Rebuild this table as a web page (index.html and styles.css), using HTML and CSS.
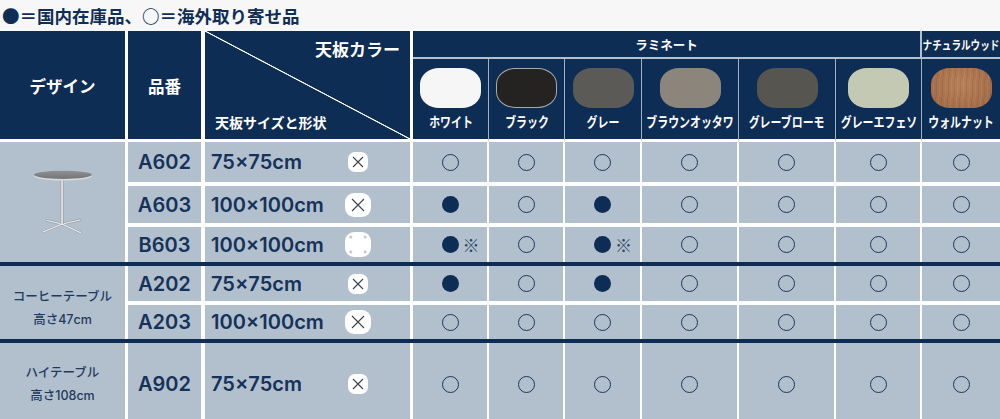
FILE: index.html
```html
<!DOCTYPE html>
<html lang="ja">
<head>
<meta charset="utf-8">
<title>テーブル 天板カラー一覧</title>
<link rel="stylesheet" href="styles.css">
</head>
<body>
<p class="legend">●＝国内在庫品、○＝海外取り寄せ品</p>
<div class="table">
  <div class="h h-side h-design">デザイン</div>
  <div class="h h-side h-code">品番</div>
  <div class="h h-side h-diag"><span class="diag-top">天板カラー</span><span class="diag-bottom">天板サイズと形状</span></div>
  <div class="h h-band h-laminate">ラミネート</div>
  <div class="h h-band h-natural"><span class="cond">ナチュラルウッド</span></div>
  <div class="h h-sw"><span class="swatch sw-white"></span><span class="sw-label">ホワイト</span></div>
  <div class="h h-sw"><span class="swatch sw-black"></span><span class="sw-label">ブラック</span></div>
  <div class="h h-sw"><span class="swatch sw-grey"></span><span class="sw-label">グレー</span></div>
  <div class="h h-sw"><span class="swatch sw-brown"></span><span class="sw-label">ブラウンオッタワ</span></div>
  <div class="h h-sw"><span class="swatch sw-bromo"></span><span class="sw-label">グレーブローモ</span></div>
  <div class="h h-sw"><span class="swatch sw-efeso"></span><span class="sw-label">グレーエフェソ</span></div>
  <div class="h h-sw last"><span class="swatch sw-walnut"></span><span class="sw-label">ウォルナット</span></div>

  <!-- group 1 -->
  <div class="c design span3">
    <svg class="table-pic" width="64" height="66" viewBox="0 0 64 66">
      <defs>
        <linearGradient id="pole" x1="0" y1="0" x2="1" y2="0">
          <stop offset="0" stop-color="#9a9ea4"/>
          <stop offset="0.5" stop-color="#f2f3f5"/>
          <stop offset="1" stop-color="#8e9298"/>
        </linearGradient>
        <linearGradient id="top" x1="0" y1="0" x2="0" y2="1">
          <stop offset="0" stop-color="#909193"/>
          <stop offset="1" stop-color="#737477"/>
        </linearGradient>
      </defs>
      <g stroke="#9aa0a8" stroke-width="2.4" stroke-linecap="round">
        <path d="M31 55 L12 63"/><path d="M31 55 L50 64"/><path d="M31 55 L16 51.5"/><path d="M31 55 L49 51"/>
      </g>
      <g stroke="#eceef1" stroke-width="1.2" stroke-linecap="round">
        <path d="M31 55 L12 63"/><path d="M31 55 L50 64"/><path d="M31 55 L16 51.5"/><path d="M31 55 L49 51"/>
      </g>
      <rect x="29.3" y="9" width="3.6" height="46" fill="url(#pole)"/>
      <ellipse cx="32" cy="7" rx="29" ry="4.6" fill="#d9dadc"/>
      <ellipse cx="32" cy="5.8" rx="29" ry="4.1" fill="url(#top)"/>
    </svg>
  </div>
  <div class="c code gap">A602</div>
  <div class="c size gap"><span>75×75cm</span>
    <svg class="shape" width="20" height="20" viewBox="0 0 20 20"><rect width="20" height="20" rx="7" fill="#fff"/><path d="M5 5L15 15M15 5L5 15" stroke="#3b414a" stroke-width="1.1"/></svg></div>
  <div class="c m gap"><span class="o"></span></div>
  <div class="c m gap"><span class="o"></span></div>
  <div class="c m gap"><span class="o"></span></div>
  <div class="c m gap"><span class="o"></span></div>
  <div class="c m gap"><span class="o"></span></div>
  <div class="c m gap"><span class="o"></span></div>
  <div class="c m gap last"><span class="o"></span></div>

  <div class="c code gap">A603</div>
  <div class="c size gap"><span>100×100cm</span>
    <svg class="shape" width="26" height="24" viewBox="0 0 26 24"><rect width="26" height="24" rx="9" fill="#fff"/><path d="M7 6L19 18M19 6L7 18" stroke="#3b414a" stroke-width="1.1"/></svg></div>
  <div class="c m gap"><span class="f"></span></div>
  <div class="c m gap"><span class="o"></span></div>
  <div class="c m gap"><span class="f"></span></div>
  <div class="c m gap"><span class="o"></span></div>
  <div class="c m gap"><span class="o"></span></div>
  <div class="c m gap"><span class="o"></span></div>
  <div class="c m gap last"><span class="o"></span></div>

  <div class="c code">B603</div>
  <div class="c size"><span>100×100cm</span>
    <svg class="shape" width="26" height="25" viewBox="0 0 26 25"><rect width="26" height="25" rx="9" fill="#fff"/><g fill="#c3c7ce"><rect x="4.5" y="3.8" width="2.6" height="2.6"/><rect x="18.9" y="3.8" width="2.6" height="2.6"/><rect x="4.5" y="18.6" width="2.6" height="2.6"/><rect x="18.9" y="18.6" width="2.6" height="2.6"/></g></svg></div>
  <div class="c m"><span class="f"></span><span class="note">※</span></div>
  <div class="c m"><span class="o"></span></div>
  <div class="c m"><span class="f"></span><span class="note">※</span></div>
  <div class="c m"><span class="o"></span></div>
  <div class="c m"><span class="o"></span></div>
  <div class="c m"><span class="o"></span></div>
  <div class="c m last"><span class="o"></span></div>

  <div class="sep"></div>

  <!-- group 2 -->
  <div class="c design span2 label g2">コーヒーテーブル<br>高さ47cm</div>
  <div class="c code gap">A202</div>
  <div class="c size gap"><span>75×75cm</span>
    <svg class="shape" width="20" height="20" viewBox="0 0 20 20"><rect width="20" height="20" rx="7" fill="#fff"/><path d="M5 5L15 15M15 5L5 15" stroke="#3b414a" stroke-width="1.1"/></svg></div>
  <div class="c m gap"><span class="f"></span></div>
  <div class="c m gap"><span class="o"></span></div>
  <div class="c m gap"><span class="f"></span></div>
  <div class="c m gap"><span class="o"></span></div>
  <div class="c m gap"><span class="o"></span></div>
  <div class="c m gap"><span class="o"></span></div>
  <div class="c m gap last"><span class="o"></span></div>

  <div class="c code">A203</div>
  <div class="c size"><span>100×100cm</span>
    <svg class="shape" width="26" height="24" viewBox="0 0 26 24"><rect width="26" height="24" rx="9" fill="#fff"/><path d="M7 6L19 18M19 6L7 18" stroke="#3b414a" stroke-width="1.1"/></svg></div>
  <div class="c m"><span class="o"></span></div>
  <div class="c m"><span class="o"></span></div>
  <div class="c m"><span class="o"></span></div>
  <div class="c m"><span class="o"></span></div>
  <div class="c m"><span class="o"></span></div>
  <div class="c m"><span class="o"></span></div>
  <div class="c m last"><span class="o"></span></div>

  <div class="sep"></div>

  <!-- group 3 -->
  <div class="c design label">ハイテーブル<br>高さ108cm</div>
  <div class="c code">A902</div>
  <div class="c size"><span>75×75cm</span>
    <svg class="shape" width="20" height="20" viewBox="0 0 20 20"><rect width="20" height="20" rx="7" fill="#fff"/><path d="M5 5L15 15M15 5L5 15" stroke="#3b414a" stroke-width="1.1"/></svg></div>
  <div class="c m"><span class="o"></span></div>
  <div class="c m"><span class="o"></span></div>
  <div class="c m"><span class="o"></span></div>
  <div class="c m"><span class="o"></span></div>
  <div class="c m"><span class="o"></span></div>
  <div class="c m"><span class="o"></span></div>
  <div class="c m last"><span class="o"></span></div>
</div>
</body>
</html>
```

FILE: styles.css
```css
* { box-sizing: border-box; }
html, body { margin: 0; padding: 0; }
body {
  width: 1000px;
  height: 419px;
  overflow: hidden;
  background: #f7f7f7;
  font-family: "Noto Sans CJK JP", "Noto Sans", sans-serif;
}

.legend {
  margin: 0;
  height: 31px;
  padding-left: 2px;
  font-size: 17.5px;
  font-weight: 700;
  line-height: 32px;
  color: #0f2d55;
  white-space: nowrap;
}

.table {
  display: grid;
  grid-template-columns: 128px 77px 208px 76px 76px 77px 97px 97px 86px 78px;
  grid-template-rows: 28px 83px 44px 41px 35px 4px 39px 34px 4px 82px;
  background: #fff;
}

/* header */
.h {
  background: #0e2d54;
  color: #fff;
  font-weight: 700;
}
.h-side {
  grid-row: span 2;
  display: flex;
  align-items: center;
  justify-content: center;
  border-bottom: 3px solid #fff;
  font-size: 16.5px;
  padding-top: 2px;
}
.h-design { border-right: 3px solid #fff; }
.h-code { border-right: 4px solid #fff; }
.h-diag {
  border-right: 3px solid #fff;
  flex-direction: column;
  justify-content: space-between;
  align-items: stretch;
  padding: 8px 10px;
  background: linear-gradient(to top right,
    #0e2d54 calc(50% - 0.9px), #ffffff calc(50% - 0.3px),
    #ffffff calc(50% + 0.3px), #0e2d54 calc(50% + 0.9px));
}
.diag-top {
  align-self: flex-end;
  font-size: 17px;
  line-height: 20px;
}
.diag-bottom {
  align-self: flex-start;
  font-size: 14px;
  line-height: 18px;
}
.h-band {
  display: flex;
  align-items: center;
  justify-content: center;
  border-bottom: 2px solid #b3c0ce;
  font-size: 12.5px;
}
.h-laminate {
  grid-column: 4 / 10;
  border-right: 2px solid #b3c0ce;
}
.cond {
  display: inline-block;
  white-space: nowrap;
  transform: scaleX(0.8);
}
.h-natural { font-size: 12px; }

.h-sw {
  display: flex;
  flex-direction: column;
  align-items: center;
  padding-top: 9px;
  border-bottom: 3px solid #fff;
  border-right: 1px solid #a2b2c4;
}
.h-sw.last { border-right: 0; }
.swatch {
  display: block;
  width: 61px;
  height: 40px;
  border-radius: 19px / 16px;
}
.sw-white { background: #f6f6f6; }
.sw-black { background: #242322; border: 1px solid #a9a9a9; }
.sw-grey { background: #5c5a56; }
.sw-brown { background: #8b857b; }
.sw-bromo { background: #565550; }
.sw-efeso { background: #c4c9b4; }
.sw-walnut {
  background:
    repeating-linear-gradient(93deg,
      rgba(95, 48, 22, 0.12) 0 1px, transparent 1px 3px,
      rgba(255, 215, 170, 0.08) 3px 4px, transparent 4px 6px),
    radial-gradient(ellipse at 50% 40%, #b7815a, #9d6744);
}
.sw-label {
  display: inline-block;
  margin-top: 5px;
  font-size: 14px;
  line-height: 16px;
  white-space: nowrap;
  transform: scaleX(0.78);
}

/* body */
.c {
  background: #b2bfcc;
  color: #15325a;
}
.c.gap { border-bottom: 4px solid #fff; }
.design {
  border-right: 3px solid #fff;
  display: flex;
  align-items: center;
  justify-content: center;
}
.span3 { grid-row: span 3; }
.span2 { grid-row: span 2; }
.label {
  text-align: center;
  font-family: Inter, "Noto Sans CJK JP", sans-serif;
  font-size: 12.5px;
  font-weight: 500;
  line-height: 23px;
  color: #1d3a60;
}
.g2 { padding-top: 10px; }
.code {
  border-right: 4px solid #fff;
  display: flex;
  align-items: center;
  justify-content: center;
  font-family: Inter, "Noto Sans", sans-serif;
  font-size: 20px;
  font-weight: 560;
}
.size {
  border-right: 3px solid #fff;
  display: grid;
  grid-template-columns: 1fr 40px;
  align-items: center;
  justify-items: start;
  padding: 0 32px 0 6px;
  font-family: Inter, "Noto Sans", sans-serif;
  font-size: 20px;
  font-weight: 560;
  white-space: nowrap;
}
.shape { justify-self: center; display: block; }
.m {
  border-right: 2px solid #fff;
  display: grid;
  grid-template-columns: 1fr auto 1fr;
  align-items: center;
}
.m.last { border-right: 0; }
.o, .f {
  grid-column: 2;
  display: block;
  width: 17px;
  height: 17px;
  border-radius: 50%;
}
.o { border: 1.5px solid #1c3659; }
.f { background: #0e2d54; }
.note {
  grid-column: 3;
  justify-self: start;
  margin-left: 4px;
  font-size: 17px;
  line-height: 1;
  color: #2c4668;
}
.sep {
  grid-column: 1 / -1;
  background: #0e2d54;
}
```
